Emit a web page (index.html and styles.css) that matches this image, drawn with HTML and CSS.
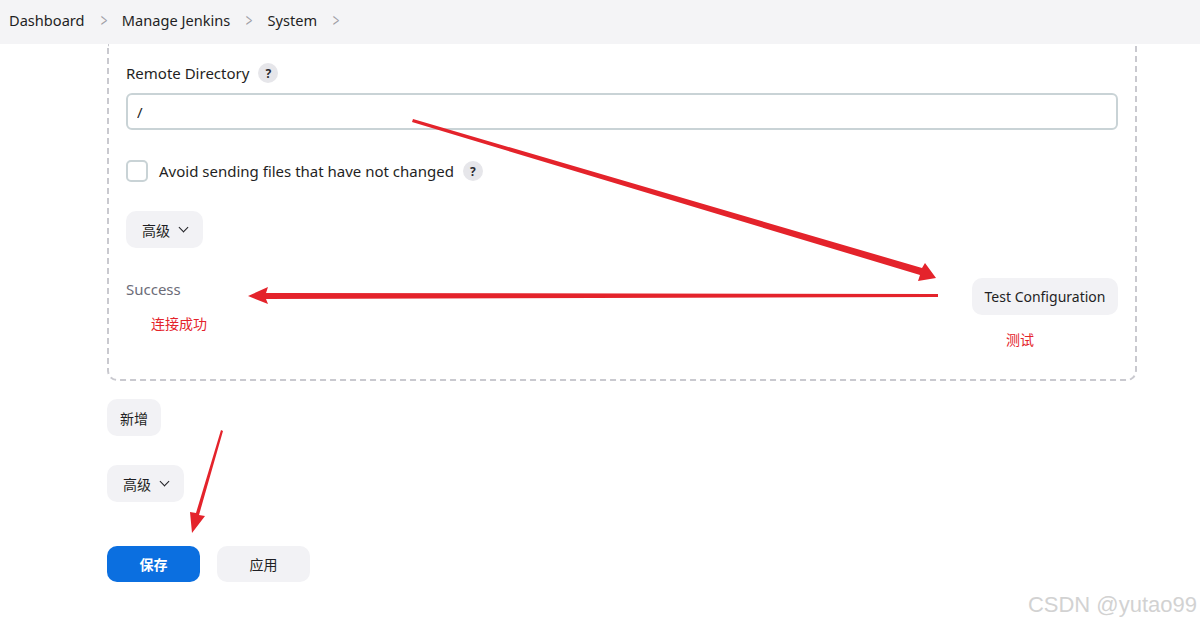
FILE: index.html
```html
<!DOCTYPE html>
<html lang="en">
<head>
  <meta charset="UTF-8">
  <title>System - Jenkins</title>
  <link rel="stylesheet" href="styles.css">
</head>
<body>

  <div class="breadcrumbs">
    <a class="crumb" href="#">Dashboard</a>
    <span class="sep">&gt;</span>
    <a class="crumb" href="#">Manage Jenkins</a>
    <span class="sep">&gt;</span>
    <a class="crumb" href="#">System</a>
    <span class="sep">&gt;</span>
  </div>

  <div class="main">
    <div class="repeated-chunk">
      <div class="field-label">
        Remote Directory <span class="help">?</span>
      </div>
      <input type="text" class="text-input" value="/">

      <label class="checkbox-row">
        <span class="checkbox"></span>
        Avoid sending files that have not changed <span class="help">?</span>
      </label>

      <button class="btn advanced">高级 <span class="caret"></span></button>

      <div class="validate-row">
        <div class="status">Success</div>
        <button class="btn">Test Configuration</button>
      </div>

      <span class="note note-ok">连接成功</span>
      <span class="note note-test">测试</span>
    </div>

    <button class="btn add-btn">新增</button>
    <button class="btn advanced outer">高级 <span class="caret"></span></button>

    <div class="bottom-bar">
      <button class="btn primary">保存</button>
      <button class="btn apply">应用</button>
    </div>
  </div>

  <svg class="arrows" width="1200" height="626" viewBox="0 0 1200 626">
    <g fill="#e4232b" stroke="none">
      <!-- to Test Configuration -->
      <polygon points="413,119 922,268 925,263 936,278 918,281 920,275 412,122"/>
      <!-- back to Success -->
      <polygon points="938,294 266,293 268,287 248,296 268,304 266,299 938,297"/>
      <!-- down to save -->
      <polygon points="221,430 223,431 199,515 205,516 192,533 190,512 196,513"/>
    </g>
  </svg>

  <div class="watermark">CSDN @yutao99</div>

</body>
</html>
```

FILE: styles.css
```css
body {
  margin: 0;
  font-family: "Noto Sans", "Noto Sans CJK SC", sans-serif;
  font-size: 15px;
  color: #1f1f24;
  background: #fff;
  width: 1200px;
  height: 626px;
  overflow: hidden;
  position: relative;
}
.breadcrumbs {
  height: 44px;
  background: #f4f4f6;
  display: flex;
  align-items: center;
  padding: 0 0 4px 9px;
  box-sizing: border-box;
}
.crumb {
  color: #1f1f24;
  text-decoration: none;
  font-size: 14.6px;
}
.sep {
  display: inline-block;
  color: #a0a0a6;
  font-size: 18px;
  line-height: 1;
  margin: 0 13px 0 14px;
  transform: scaleX(0.65);
}
.main {
  padding-left: 107px;
  width: 1030px;
}
.repeated-chunk {
  position: relative;
  border: 2px dashed #c9c9cf;
  border-top: none;
  border-radius: 0 0 10px 10px;
  padding: 18px 17px 64px 17px;
}
.field-label {
  display: flex;
  align-items: center;
  height: 22px;
  gap: 9px;
}
.help {
  display: inline-flex;
  align-items: center;
  justify-content: center;
  width: 20px;
  height: 20px;
  border-radius: 50%;
  background: #e6e6ea;
  color: #2a2a30;
  font-size: 12px;
  font-weight: 700;
}
.text-input {
  display: block;
  box-sizing: border-box;
  width: 100%;
  height: 37px;
  margin-top: 9px;
  border: 2px solid #c9d3d6;
  border-radius: 6px;
  padding: 0 9px;
  font-family: inherit;
  font-size: 15px;
  color: #1f1f24;
}
.checkbox-row {
  display: flex;
  align-items: center;
  gap: 11px;
  margin-top: 30px;
  height: 22px;
}
.checkbox-row .help {
  margin-left: -2px;
}
.checkbox {
  width: 18px;
  height: 18px;
  border: 2px solid #c9d3d6;
  border-radius: 5px;
}
.btn {
  display: inline-flex;
  align-items: center;
  justify-content: center;
  height: 37px;
  padding: 0 14px;
  border: none;
  border-radius: 10px;
  background: #f2f2f5;
  color: #1f1f24;
  font-family: inherit;
  font-size: 14px;
  cursor: pointer;
}
.advanced {
  margin-top: 29px;
  width: 77px;
  gap: 10px;
}
.caret {
  width: 6px;
  height: 6px;
  border-right: 1.6px solid #1f1f24;
  border-bottom: 1.6px solid #1f1f24;
  transform: rotate(45deg);
  margin-top: -4px;
}
.validate-row {
  display: flex;
  justify-content: space-between;
  align-items: flex-start;
  margin-top: 30px;
}
.status {
  color: #6c6c78;
  line-height: 22px;
}
.validate-row .btn {
  width: 146px;
  padding: 0;
}
.note {
  position: absolute;
  color: #e4232b;
  font-size: 14px;
}
.note-ok {
  left: 42px;
  top: 269px;
}
.note-test {
  left: 897px;
  top: 285px;
}
.add-btn {
  display: flex;
  margin-top: 18px;
  width: 54px;
  padding: 0;
}
.advanced.outer {
  display: flex;
  margin-top: 29px;
}
.bottom-bar {
  display: flex;
  gap: 17px;
  margin-top: 44px;
}
.bottom-bar .btn {
  width: 93px;
  height: 36px;
  padding: 0;
}
.primary {
  background: #0b6fe0;
  color: #fff;
  font-weight: 700;
}
.arrows {
  position: absolute;
  left: 0;
  top: 0;
  pointer-events: none;
}
.watermark {
  position: absolute;
  right: 3px;
  top: 592px;
  font-family: "Liberation Sans", sans-serif;
  font-size: 22px;
  color: #d2d2d2;
}
```
